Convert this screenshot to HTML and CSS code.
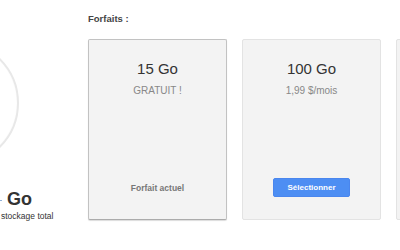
FILE: index.html
```html
<!DOCTYPE html>
<html lang="fr">
<head>
<meta charset="utf-8">
<link rel="stylesheet" href="styles.css">
</head>
<body>
<div class="page">
  <aside class="usage">
    <div class="ring"></div>
    <div class="total"><span class="mark"></span>Go</div>
    <div class="caption">stockage total</div>
  </aside>
  <main class="plans">
    <h2 class="title">Forfaits :</h2>
    <div class="cards">
      <section class="card current">
        <div class="head">
          <div class="size">15 Go</div>
          <div class="price">GRATUIT !</div>
        </div>
        <div class="foot"><span class="badge">Forfait actuel</span></div>
      </section>
      <section class="card">
        <div class="head">
          <div class="size">100 Go</div>
          <div class="price">1,99 $/mois</div>
        </div>
        <div class="foot"><button class="select">Sélectionner</button></div>
      </section>
      <section class="card"></section>
    </div>
  </main>
</div>
</body>
</html>
```
FILE: styles.css
```css
html, body {
  margin: 0;
  padding: 0;
  background: #ffffff;
  overflow: hidden;
}
body {
  font-family: "Liberation Sans", Arial, sans-serif;
  color: #333333;
}
.page {
  display: flex;
  width: 400px;
  height: 250px;
  overflow: hidden;
}
.usage {
  width: 88px;
  flex: none;
  display: flex;
  flex-direction: column;
}
.ring {
  width: 122px;
  height: 122px;
  margin-top: 40px;
  margin-left: -107px;
  border: 2px solid #e8e8e8;
  border-radius: 50%;
  box-shadow: inset 0 0 1px #f0f0f0;
  flex: none;
}
.total {
  margin-top: 23px;
  font-size: 18px;
  line-height: 20px;
  font-weight: bold;
  color: #333333;
  display: flex;
  align-items: center;
}
.mark {
  display: inline-block;
  width: 2px;
  height: 1px;
  margin-top: 2px;
  margin-right: 5px;
  background: #8fb0d8;
}
.caption {
  margin-top: 2px;
  margin-left: 1px;
  font-size: 8.5px;
  line-height: 10px;
  color: #333333;
  white-space: nowrap;
}
.plans {
  flex: 1;
  padding-top: 13px;
}
.title {
  margin: 0 0 14px 0;
  font-size: 9.5px;
  line-height: 12px;
  font-weight: bold;
  color: #444444;
}
.cards {
  display: flex;
  gap: 15px;
}
.card {
  flex: none;
  box-sizing: border-box;
  width: 139px;
  height: 181px;
  background: #f3f3f3;
  border: 1px solid #e3e3e3;
  border-radius: 2px;
  display: flex;
  flex-direction: column;
  justify-content: space-between;
  align-items: center;
  padding: 20px 0 22px;
}
.card.current {
  border-color: #c2c2c2;
  border-bottom-color: #ababab;
  box-shadow: 0 1px 1px rgba(0, 0, 0, 0.14);
}
.head {
  display: flex;
  flex-direction: column;
  align-items: center;
}
.size {
  font-size: 15px;
  line-height: 18px;
  color: #333333;
}
.price {
  margin-top: 7px;
  font-size: 10px;
  line-height: 12px;
  color: #888888;
}
.foot {
  height: 19px;
  display: flex;
  align-items: center;
  justify-content: center;
}
.badge {
  font-size: 8.5px;
  font-weight: bold;
  color: #777777;
}
.select {
  width: 77px;
  height: 19px;
  padding: 0;
  border: 1px solid #4a86ee;
  border-radius: 2px;
  background: #4d8ef3;
  color: #ffffff;
  font-family: "Liberation Sans", Arial, sans-serif;
  font-size: 8px;
  font-weight: bold;
}
```
